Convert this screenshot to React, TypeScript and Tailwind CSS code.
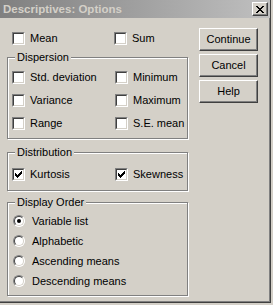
import React from "react";

const font = { fontFamily: '"Liberation Sans", Arial, sans-serif' };

function CheckMark() {
  const cols = [2, 3, 4, 3, 2, 1, 0];
  return (
    <svg className="absolute left-[2px] top-[2px]" width="7" height="7" viewBox="0 0 7 7" shapeRendering="crispEdges">
      {cols.map((y, x) => (
        <rect key={x} x={x} y={y} width="1" height="3" fill="#000" />
      ))}
    </svg>
  );
}

function Check({ checked }: { checked?: boolean }) {
  return (
    <span className="relative block w-[13px] h-[13px] shrink-0 bg-white border border-t-[#808080] border-l-[#808080] border-r-white border-b-white">
      <span className="absolute inset-0 border border-t-[#404040] border-l-[#404040] border-r-[#d4d0c8] border-b-[#d4d0c8]" />
      {checked && <CheckMark />}
    </span>
  );
}

function Radio({ checked }: { checked?: boolean }) {
  return (
    <span className="relative block w-[12px] h-[12px] shrink-0 rounded-full bg-white border border-t-[#808080] border-l-[#808080] border-r-white border-b-white">
      <span className="absolute inset-0 rounded-full border border-t-[#404040] border-l-[#404040] border-r-[#d4d0c8] border-b-[#d4d0c8]" />
      {checked && <span className="absolute left-[3px] top-[3px] w-[4px] h-[4px] rounded-full bg-black" />}
    </span>
  );
}

function CheckItem({ label, checked, w }: { label: string; checked?: boolean; w?: string }) {
  return (
    <div className={`flex items-center gap-[5px] h-[13px] ${w ?? ""}`}>
      <Check checked={checked} />
      <span className="text-[11px] leading-[13px] text-black whitespace-nowrap">{label}</span>
    </div>
  );
}

function RadioItem({ label, checked }: { label: string; checked?: boolean }) {
  return (
    <div className="flex items-center gap-[7px] h-[12px]">
      <Radio checked={checked} />
      <span className="text-[11px] leading-[13px] text-black whitespace-nowrap">{label}</span>
    </div>
  );
}

function Group({ title, className, children }: { title: string; className: string; children: React.ReactNode }) {
  return (
    <div className={`relative w-[181px] border border-[#808080] shadow-[inset_1px_1px_0_#fff,1px_1px_0_#fff] ${className}`}>
      <span className="absolute left-[7px] top-[-7px] px-[2px] bg-[#d4d0c8] text-[11px] leading-[13px] text-black">
        {title}
      </span>
      {children}
    </div>
  );
}

function Button({ label }: { label: string }) {
  return (
    <div className="w-[59px] h-[23px] flex items-center justify-center border border-t-white border-l-white border-r-[#404040] border-b-[#404040] shadow-[inset_-1px_-1px_0_#808080] text-[11px] text-black">
      {label}
    </div>
  );
}

export default function App() {
  return (
    <div className="w-[273px] h-[305px] bg-[#d4d0c8]" style={font}>
      <div className="w-[271px] h-[303px] border-r border-b border-r-[#404040] border-b-[#404040] shadow-[inset_-1px_-1px_0_#808080] flex flex-col">
        <div className="h-[18px] flex items-center justify-between bg-linear-to-r from-[#808080] to-[#c0c0c0] pl-[3px] pr-[2px]">
          <span className="text-[11.5px] font-bold text-[#d4d0c8] leading-[13px] whitespace-nowrap">Descriptives: Options</span>
          <div className="w-[16px] h-[14px] bg-[#d4d0c8] border border-t-white border-l-white border-r-[#404040] border-b-[#404040] shadow-[inset_-1px_-1px_0_#808080] flex items-center justify-center">
            <svg width="8" height="7" viewBox="0 0 8 7" shapeRendering="crispEdges">
              {[0, 1, 2, 3, 4, 5, 6].map((i) => (
                <g key={i}>
                  <rect x={i} y={i} width="2" height="1" fill="#000" />
                  <rect x={6 - i} y={i} width="2" height="1" fill="#000" />
                </g>
              ))}
            </svg>
          </div>
        </div>
        <div className="flex">
          <div className="pl-[7px] flex flex-col">
            <div className="mt-[14px] pl-[5px] flex">
              <CheckItem label="Mean" w="w-[102px]" />
              <CheckItem label="Sum" />
            </div>
            <Group title="Dispersion" className="mt-[12px] h-[82px] pt-[13px] pl-[4px]">
              <div className="flex flex-col gap-[10px]">
                <div className="flex">
                  <CheckItem label="Std. deviation" w="w-[103px]" />
                  <CheckItem label="Minimum" />
                </div>
                <div className="flex">
                  <CheckItem label="Variance" w="w-[103px]" />
                  <CheckItem label="Maximum" />
                </div>
                <div className="flex">
                  <CheckItem label="Range" w="w-[103px]" />
                  <CheckItem label="S.E. mean" />
                </div>
              </div>
            </Group>
            <Group title="Distribution" className="mt-[13px] h-[39px] pt-[15px] pl-[4px]">
              <div className="flex">
                <CheckItem label="Kurtosis" checked w="w-[103px]" />
                <CheckItem label="Skewness" checked />
              </div>
            </Group>
            <Group title="Display Order" className="mt-[11px] h-[94px] pt-[12px] pl-[5px]">
              <div className="flex flex-col gap-[8px]">
                <RadioItem label="Variable list" checked />
                <RadioItem label="Alphabetic" />
                <RadioItem label="Ascending means" />
                <RadioItem label="Descending means" />
              </div>
            </Group>
          </div>
          <div className="ml-[11px] mt-[10px] flex flex-col gap-[3px]">
            <Button label="Continue" />
            <Button label="Cancel" />
            <Button label="Help" />
          </div>
        </div>
      </div>
    </div>
  );
}
